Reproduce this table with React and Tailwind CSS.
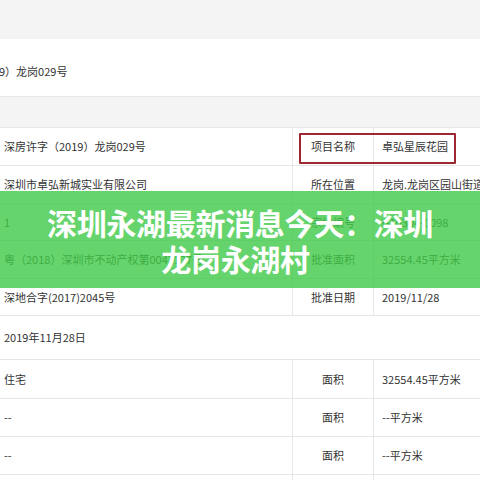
const ROWS = [
  { h: "h-[38px]", a: "深房许字（2019）龙岗029号", b: "项目名称", c: "卓弘星辰花园" },
  { h: "h-[38px]", a: "深圳市卓弘新城实业有限公司", b: "所在位置", c: "龙岗.龙岗区园山街道办事处" },
  { h: "h-[37px]", a: "1", b: "宗地编号", c: "G10304-0098" },
  { h: "h-[38px]", a: "粤（2018）深圳市不动产权第0047127号", b: "批准面积", c: "32554.45平方米" },
  { h: "h-[37px]", a: "深地合字(2017)2045号", b: "批准日期", c: "2019/11/28" },
];

const AREA_ROWS = [
  { h: "h-[39px]", a: "住宅", c: "32554.45平方米" },
  { h: "h-[38px]", a: "--", c: "--平方米" },
  { h: "h-[38px]", a: "--", c: "--平方米" },
  { h: "h-[20px]", a: "", c: "" },
];

function Row({ h, a, b, c }) {
  return (
    <div className={`grid grid-cols-[292px_81px_1fr] border-b border-[#e6e6e6] ${h}`}>
      <div className="flex items-center pl-[4px] whitespace-nowrap overflow-hidden">{a}</div>
      <div className="flex items-center justify-center border-l border-[#e6e6e6] whitespace-nowrap">{b}</div>
      <div className="flex items-center pl-[8px] border-l border-[#e6e6e6] whitespace-nowrap overflow-hidden">{c}</div>
    </div>
  );
}

export default function App() {
  return (
    <div
      className="relative w-[480px] h-[480px] overflow-hidden bg-white text-[11px] text-[#333]"
      style={{ fontFamily: '"Noto Sans CJK SC", "Noto Sans", sans-serif' }}
    >
      <div className="h-[39px] bg-[#f4f4f4]" />
      <div className="h-[58px] flex items-center pt-[7px] border-b border-[#e6e6e6] whitespace-nowrap">
        <span className="ml-[-1px]">9）龙岗029号</span>
      </div>
      <div className="h-[30px] bg-[#f4f4f4]" />

      <div className="border-t border-[#e6e6e6]">
        {ROWS.map((r) => <Row key={r.b} {...r} />)}
        <div className="h-[44px] flex items-center pl-[4px] border-b border-[#e6e6e6]">2019年11月28日</div>
        {AREA_ROWS.map((r, i) => (
          <Row key={i} h={r.h} a={r.a} b={r.a ? "面积" : ""} c={r.c} />
        ))}
      </div>

      {/* red highlight box */}
      <div className="absolute left-[299px] top-[133px] w-[157px] h-[31px] border-2 border-[#9d2832] rounded-[1px]" />

      {/* green title banner */}
      <div className="absolute left-0 top-[191px] w-full h-[97px] bg-[rgba(64,201,71,0.8)] flex flex-col items-center justify-center">
        <p className="text-white font-bold text-[30px] leading-[36px] tracking-[-0.3px]">深圳永湖最新消息今天：深圳</p>
        <p className="text-white font-bold text-[30px] leading-[36px] tracking-[-0.3px] pr-[9px]">龙岗永湖村</p>
      </div>
    </div>
  );
}
